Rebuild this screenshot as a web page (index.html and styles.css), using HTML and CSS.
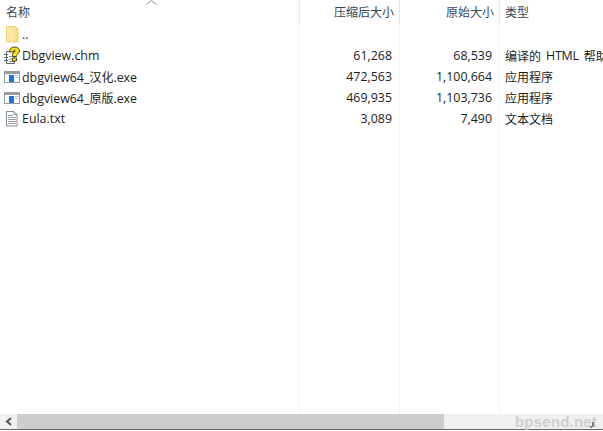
FILE: index.html
```html
<!DOCTYPE html>
<html lang="zh">
<head>
<meta charset="utf-8">
<title>Archive</title>
<link rel="stylesheet" href="styles.css">
</head>
<body>
<div class="window">
  <div class="list">
    <div class="row head">
      <div class="c name"><span class="hname">名称</span><svg class="sort" width="11" height="5" viewBox="0 0 11 5"><path d="M.5 4.500 5.500.5l5 4" fill="none" stroke="#8a8a8a"/></svg></div>
      <div class="c num">压缩后大小</div>
      <div class="c num o">原始大小</div>
      <div class="c type">类型</div>
    </div>
    <div class="row">
      <div class="c name"><svg class="ic" width="18" height="19" viewBox="0 0 18 19"><path d="M3.500 1.500h8.500l3 2v13.500H3.500z" fill="#fbe6a3" stroke="#f0d27a"/><path d="M12 1.500v15.500" stroke="#f5d98a"/><path d="M13 3h1.500v13.500H13z" fill="#f7d67f"/></svg><span>..</span></div>
      <div class="c num"></div><div class="c num o"></div><div class="c type"></div>
    </div>
    <div class="row">
      <div class="c name"><svg class="ic" width="18" height="19" viewBox="0 0 18 19"><path d="M3.500 5.500h8v12h-8z" fill="#fff" stroke="#5b6570"/><path d="M1 8.500h4M1 11.500h4M1 14.500h4" stroke="#5b6570"/><path d="M6 10.500h3M6 13h5M6 15.500h5" stroke="#7f8a96"/><path d="M6.500 6C6.500 2.500 8.500 1 11.500 1c3 0 5 1.600 5 4 0 2.500-2.500 3-3 4.500v1h-4v-2c0-2 2.700-2.500 2.700-3.700 0-1.100-1.700-1.100-1.900 1.200z" fill="#f9e21d" stroke="#4d4a1c"/><path d="M9.500 12h4v3h-4z" fill="#f9e21d" stroke="#4d4a1c"/></svg><span>Dbgview.chm</span></div>
      <div class="c num">61,268</div><div class="c num o">68,539</div><div class="c type"><span class="zh">编译的</span><span class="en">HTML</span><span class="zh">帮助文件</span></div>
    </div>
    <div class="row">
      <div class="c name"><svg class="ic" width="18" height="19" viewBox="0 0 18 19"><path d="M1 4h16v12H1z" fill="#979da5"/><path d="M2 7h14v8H2z" fill="#fff"/><path d="M6 8h5v7H6z" fill="#1a78dc"/><path d="M12 8.500h3M12 10.500h3" stroke="#a9c6e6"/></svg><span>dbgview64_<span class="zh">汉化</span>.exe</span></div>
      <div class="c num">472,563</div><div class="c num o">1,100,664</div><div class="c type">应用程序</div>
    </div>
    <div class="row">
      <div class="c name"><svg class="ic" width="18" height="19" viewBox="0 0 18 19"><path d="M1 4h16v12H1z" fill="#979da5"/><path d="M2 7h14v8H2z" fill="#fff"/><path d="M6 8h5v7H6z" fill="#1a78dc"/><path d="M12 8.500h3M12 10.500h3" stroke="#a9c6e6"/></svg><span>dbgview64_<span class="zh">原版</span>.exe</span></div>
      <div class="c num">469,935</div><div class="c num o">1,103,736</div><div class="c type">应用程序</div>
    </div>
    <div class="row">
      <div class="c name"><svg class="ic" width="18" height="19" viewBox="0 0 18 19"><path d="M3.500 2.500h7.500l3 3v11.500H3.500z" fill="#fff" stroke="#858c94"/><path d="M11 2.500v3h3" fill="none" stroke="#858c94"/><path d="M5 6.500h5M5 8.500h8M5 10.500h8M5 12.500h8M5 14.500h8" stroke="#959ca4"/></svg><span>Eula.txt</span></div>
      <div class="c num">3,089</div><div class="c num o">7,490</div><div class="c type">文本文档</div>
    </div>
  </div>
  <div class="scrollbar">
    <div class="arrow"><svg width="8" height="9" viewBox="0 0 8 9"><path d="M6 1 2 4.500 6 8" fill="none" stroke="#555" stroke-width="2"/></svg></div>
    <div class="thumb"></div>
    <div class="track"><span class="mark">bpsend.net</span><svg class="cursor" width="6" height="6" viewBox="0 0 6 6"><path d="M4 0v4L1 5.500" fill="none" stroke="#444" stroke-width="1.200"/></svg></div>
  </div>
  <div class="edge"></div>
</div>
</body>
</html>
```
FILE: styles.css
```css
* { box-sizing: border-box; }
html, body { margin: 0; padding: 0; }
body { background: #fff; font-family: "Open Sans", "Noto Sans CJK SC", sans-serif; font-size: 12.4px; color: #1c1c1c; }
.window { width: 603px; height: 431px; display: flex; flex-direction: column; overflow: hidden; }
.list {
  flex: 1;
  background:
    linear-gradient(#f0f4f9, #f0f4f9) 299px 0 / 1px 100% no-repeat,
    linear-gradient(#f0f4f9, #f0f4f9) 399px 0 / 1px 100% no-repeat,
    linear-gradient(#f0f4f9, #f0f4f9) 499px 0 / 1px 100% no-repeat;
}
.row { display: grid; grid-template-columns: 300px 100px 100px 103px; height: 21px; align-items: center; white-space: nowrap; }
.head { height: 24px; font-size: 12px; }
.c { overflow: hidden; height: 100%; display: flex; align-items: center; }
.name { padding-left: 3px; gap: 1px; position: relative; }
.ic { flex: none; }
.zh { font-size: 12px; }
.en { margin: 0 5px; font-size: 12.4px; letter-spacing: -.2px; }
.head .name { padding-left: 6px; }
.sort { position: absolute; left: 146px; top: 0; }
.head .c { border-right: 1px solid #e5e5e5; color: #35465a; padding-bottom: 1px; }
.head .type { border-right: 0; }
.num { justify-content: flex-end; padding-right: 8px; }
.head .num { padding-right: 5px; }
.type { padding-left: 5px; font-size: 12px; }
.scrollbar { height: 15px; display: flex; background: #f0f0f0; }
.arrow { width: 17px; display: flex; align-items: center; justify-content: center; }
.thumb { width: 427px; background: #cdcdcd; }
.track { flex: 1; position: relative; }
.mark { position: absolute; right: 6px; top: -1px; font: bold 15px/17px "Liberation Sans", sans-serif; color: #cecece; letter-spacing: .2px; }
.cursor { position: absolute; right: 8px; top: 8px; }
.edge { height: 2px; background: #fff; border-top: 1px solid #696969; }
```
